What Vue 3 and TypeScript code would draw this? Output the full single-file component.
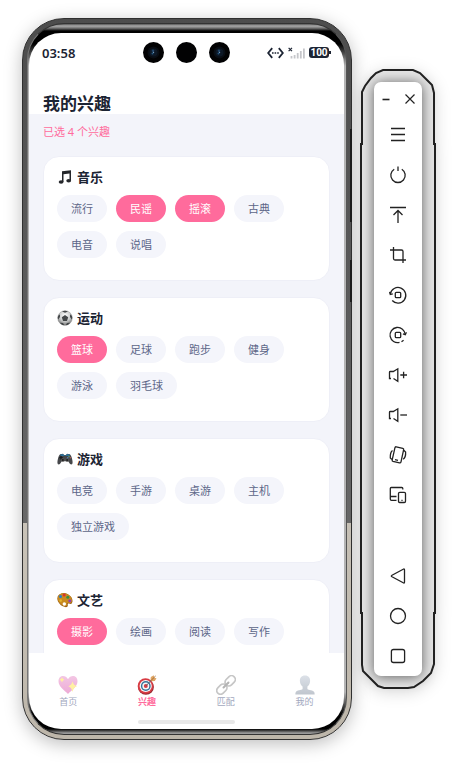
<script setup lang="ts">
import { ref, computed } from 'vue'

interface Group {
  id: string
  name: string
  items: string[]
}

const groups: Group[] = [
  { id: 'music', name: '音乐', items: ['流行', '民谣', '摇滚', '古典', '电音', '说唱'] },
  { id: 'sport', name: '运动', items: ['篮球', '足球', '跑步', '健身', '游泳', '羽毛球'] },
  { id: 'game', name: '游戏', items: ['电竞', '手游', '桌游', '主机', '独立游戏'] },
  { id: 'art', name: '文艺', items: ['摄影', '绘画', '阅读', '写作'] },
]

const selected = ref<string[]>(['民谣', '摇滚', '篮球', '摄影'])
const count = computed(() => selected.value.length)

function toggle(item: string) {
  selected.value = selected.value.includes(item)
    ? selected.value.filter((s) => s !== item)
    : [...selected.value, item]
}

const tabs = [
  { id: 'home', label: '首页' },
  { id: 'interest', label: '兴趣' },
  { id: 'match', label: '匹配' },
  { id: 'mine', label: '我的' },
]
const activeTab = ref('interest')

const tools: { name: string; paths: string[] }[] = [
  { name: 'menu', paths: ['M3 3.5H17M3 9.5H17M3 15.5H17'] },
  { name: 'power', paths: ['M6.2 4.2A7.2 7.2 0 1 0 13.8 4.2', 'M10 1.5V6'] },
  { name: 'top', paths: ['M2 2.5H18M10 18V6M5.5 10L10 5.5L14.5 10'] },
  { name: 'crop', paths: ['M2 5H13.5Q15 5 15 6.5V18', 'M5.5 2V13.5Q5.5 15 7 15H18'] },
  { name: 'rotate left', paths: ['M2.3 9A7.8 7.8 0 1 1 4.2 15.5', 'M1.6 6.8L2.3 9.4L4.8 8.8', 'M8.3 7.3H11.7Q12.7 7.3 12.7 8.3V11.7Q12.7 12.7 11.7 12.7H8.3Q7.3 12.7 7.3 11.7V8.3Q7.3 7.3 8.3 7.3Z'] },
  { name: 'rotate right', paths: ['M17.2 9.5A7.6 7.6 0 1 0 11.5 17.4M13.5 16.8L15.6 15.2', 'M18.4 7.2L17.3 9.6L14.9 8.8', 'M8.3 7.3H11.7Q12.7 7.3 12.7 8.3V11.7Q12.7 12.7 11.7 12.7H8.3Q7.3 12.7 7.3 11.7V8.3Q7.3 7.3 8.3 7.3Z'] },
  { name: 'volume up', paths: ['M3 13.5H1.5V7.2Q1.5 6.5 2.3 6.5H5.3L9.8 3.8V16.2L5.5 13.5', 'M12.3 10H19M15.6 6.7V13.3'] },
  { name: 'volume down', paths: ['M3 13.5H1.5V7.2Q1.5 6.5 2.3 6.5H5.3L9.8 3.8V16.2L5.5 13.5', 'M12.3 10H19'] },
  { name: 'shake', paths: ['M8.2 1.8L14.8 3.4Q15.9 3.7 15.6 4.8L13 16.8Q12.7 18.1 11.5 17.9L5 16.4Q3.9 16.1 4.2 14.9L6.9 2.8Q7.2 1.6 8.2 1.8Z', 'M7 14.6L10 15.3', 'M4.5 5.5Q2 7.5 2.3 13L4 14.5M15.8 5.2L17.6 7Q18 12.2 15.2 14.3'] },
  { name: 'devices', paths: ['M14.8 4.5V3.5Q14.8 2.5 13.8 2.5H3.3Q2.3 2.5 2.3 3.5V14Q2.3 15.3 3.5 15.3H8.5M2.3 11.5H8.5', 'M11.7 7.3H16.3Q17.5 7.3 17.5 8.5V16.3Q17.5 17.5 16.3 17.5H11.7Q10.5 17.5 10.5 16.3V8.5Q10.5 7.3 11.7 7.3Z', 'M13.4 15.3H14.6'] },
]
const navTools: { name: string; paths: string[] }[] = [
  { name: 'back', paths: ['M15.2 3.2Q16.5 2.5 16.5 4V16Q16.5 17.5 15.2 16.8L4 10.8Q2.6 10 4 9.2Z'] },
  { name: 'home', paths: ['M10 2.5A7.5 7.5 0 1 1 10 17.5A7.5 7.5 0 1 1 10 2.5Z'] },
  { name: 'recent', paths: ['M5.5 3.5H14.5Q16.6 3.5 16.6 5.6V14.4Q16.6 16.5 14.5 16.5H5.5Q3.4 16.5 3.4 14.4V5.6Q3.4 3.5 5.5 3.5Z'] },
]
</script>

<template>
  <div class="stage">
    <div class="phone">
      <i class="key volume-key"></i>
      <i class="key power-key"></i>
      <div class="bezel">
        <div class="screen">
          <div class="status">
            <span class="time">03:58</span>
            <div class="cameras">
              <svg v-for="n in 3" :key="n" width="21" height="21" viewBox="0 0 21 21">
                <circle cx="10.5" cy="10.5" r="10.5" fill="#020203" />
                <template v-if="n !== 2">
                  <circle cx="10.5" cy="10.5" r="6" fill="#090d13" />
                  <circle cx="10.5" cy="10.5" r="4" fill="#0d1826" />
                  <circle cx="10" cy="8.8" r="1.3" fill="#1f4265" />
                  <circle cx="9.5" cy="11.5" r="1" fill="#245680" />
                  <circle cx="10.6" cy="10.3" r=".6" fill="#8db6d8" />
                </template>
              </svg>
            </div>
            <div class="signals">
              <svg width="17" height="12" viewBox="0 0 17 12" fill="none" stroke="#1c2433" stroke-width="1.8">
                <path d="M5.2 1.2L1.2 6L5.2 10.8M11.8 1.2L15.8 6L11.8 10.8" />
                <path d="M5 6H12" stroke-dasharray="1.6 1" stroke-width="1.5" />
              </svg>
              <svg width="17" height="12" viewBox="0 0 17 12">
                <path d="M.6 .8L4 4.2M4 .8L.6 4.2" stroke="#1c2433" stroke-width="1.2" />
                <path d="M3.5 11.5V9M6.6 11.5V8M9.7 11.5V6M12.8 11.5V4M15.9 11.5V1.5" stroke="#c5c6ca" stroke-width="1.8" />
              </svg>
              <span class="battery">100</span>
            </div>
          </div>
          <h1>我的兴趣</h1>
          <main>
            <p class="summary">已选 {{ count }} 个兴趣</p>
            <section v-for="g in groups" :key="g.id" class="card">
              <h2>
                <svg v-if="g.id === 'music'" width="16" height="16" viewBox="0 0 16 16">
                  <path d="M5 2.3L14 1.3V11.5H12.5V4.4L6.5 5.2V13H5Z" fill="#25272b" />
                  <ellipse cx="4.1" cy="13" rx="2.4" ry="1.8" fill="#25272b" />
                  <ellipse cx="11.7" cy="11.8" rx="2.4" ry="1.8" fill="#25272b" />
                </svg>
                <svg v-else-if="g.id === 'sport'" width="16" height="16" viewBox="0 0 16 16">
                  <defs>
                    <radialGradient id="ball" cx=".5" cy=".35" r=".7">
                      <stop offset="0" stop-color="#fff" />
                      <stop offset=".5" stop-color="#cfd1d1" />
                      <stop offset="1" stop-color="#666" />
                    </radialGradient>
                  </defs>
                  <circle cx="8" cy="8" r="7.3" fill="url(#ball)" stroke="#858787" stroke-width=".4" />
                  <path d="M8 5L11.2 7.3L10 11H6L4.8 7.3ZM5 1.4L8 2.7L11 1.4Q8 .1 5 1.4ZM1 6L2.9 4.3L3 7L1.2 9.6Q.4 7.8 1 6ZM15 6L13.1 4.3L13 7L14.8 9.6Q15.6 7.8 15 6ZM3 12.7L6 13L7.5 15.4Q4.6 15.2 3 12.7ZM13 12.7L10 13L8.5 15.4Q11.4 15.2 13 12.7Z" fill="#444749" />
                </svg>
                <svg v-else-if="g.id === 'game'" width="16" height="16" viewBox="0 0 16 16">
                  <path d="M3.2 3.2L6 2.8L7 4H9L10 2.8L12.8 3.2Q14.3 4 15.2 8.6Q16.3 13.4 14.3 13.5Q12.8 13.4 11.2 10.3H4.8Q3.2 13.4 1.7 13.5Q-.3 13.4 .8 8.6Q1.7 4 3.2 3.2Z" fill="#45474a" />
                  <path d="M2.8 3.6L6 3L7.3 4.6H8.7L10 3L13.2 3.6L12 5H4Z" fill="#2b6f98" />
                  <path d="M4 5V8.4M2.3 6.7H5.7" stroke="#18191b" stroke-width="1.3" />
                  <circle cx="5.8" cy="9" r="1.5" fill="#222" stroke="#777" stroke-width=".4" />
                  <circle cx="10.2" cy="9" r="1.5" fill="#222" stroke="#777" stroke-width=".4" />
                  <circle cx="12" cy="5.5" r=".7" fill="#62af6a" />
                  <circle cx="13.3" cy="6.8" r=".7" fill="#c55c55" />
                  <circle cx="10.8" cy="6.8" r=".7" fill="#518ecb" />
                </svg>
                <svg v-else width="16" height="16" viewBox="0 0 16 16">
                  <path d="M2 2.8Q6-.5 11 2.2Q15.8 5 15.5 9.4Q15 12.8 12 11.6Q10.4 11.1 10.8 13Q11.1 15.5 8.2 15.1Q3.3 14 .9 9.2Q-.6 5 2 2.8Z" fill="#9c6014" />
                  <path d="M2.3 2.7Q6.3-.2 10.8 2.6Q15.3 5 15 9Q14.5 11.8 11.8 10.8Q9.6 10.4 10 13Q9.8 14.6 7.5 14Q3 12.7 1.2 8.7Q0 5 2.3 2.7Z" fill="#c98a1f" />
                  <ellipse cx="7.3" cy="12" rx="1.7" ry="1.8" fill="#fff" />
                  <circle cx="3.5" cy="4.5" r="1.5" fill="#247fce" />
                  <circle cx="7.2" cy="3" r="1.5" fill="#d9322d" />
                  <circle cx="10.8" cy="5.2" r="1.5" fill="#358e43" />
                  <circle cx="12.8" cy="8.8" r="1.5" fill="#963fb0" />
                  <circle cx="3.7" cy="8.6" r="1.3" fill="#e3b52d" />
                </svg>
                {{ g.name }}
              </h2>
              <div class="chips">
                <button
                  v-for="item in g.items"
                  :key="item"
                  type="button"
                  :class="['chip', { on: selected.includes(item) }]"
                  :aria-pressed="selected.includes(item)"
                  @click="toggle(item)"
                >{{ item }}</button>
              </div>
            </section>
          </main>
          <nav class="tabs">
            <button
              v-for="t in tabs"
              :key="t.id"
              type="button"
              :class="['tab', { active: activeTab === t.id }]"
              @click="activeTab = t.id"
            >
              <svg v-if="t.id === 'home'" width="20" height="20" viewBox="0 0 20 20">
                <defs>
                  <linearGradient id="heart" x1="0" y1="0" x2="0" y2="1">
                    <stop offset="0" stop-color="#f3c6e4" />
                    <stop offset="1" stop-color="#edaad5" />
                  </linearGradient>
                </defs>
                <path d="M10 19C6.5 15.5.5 11.5.5 6.3C.5 0 7.5-.5 10 4.2C12.5-.5 19.5 0 19.5 6.3C19.5 11.5 13.5 15.5 10 19Z" fill="url(#heart)" />
                <path d="M14.5 6.2Q15.3 10.3 19 11.2Q15.3 12.2 14.5 17Q13.7 12.2 10.3 11.2Q13.7 10.3 14.5 6.2ZM4 2.2Q4.5 4.1 6.4 4.8Q4.5 5.5 4 7.5Q3.5 5.5 1.5 4.8Q3.5 4.1 4 2.2Z" fill="#fff0a3" />
              </svg>
              <svg v-else-if="t.id === 'interest'" width="20" height="20" viewBox="0 0 20 20">
                <ellipse cx="8.9" cy="12" rx="8" ry="7.7" fill="#962630" />
                <circle cx="8.5" cy="11" r="7.8" fill="#d83b43" />
                <circle cx="8.7" cy="11" r="6.1" fill="#f5f7f8" />
                <circle cx="8.8" cy="11" r="4.9" fill="#367399" />
                <circle cx="8.8" cy="11" r="3.5" fill="#f5f7f8" />
                <circle cx="8.8" cy="11" r="2" fill="#d83b43" />
                <path d="M8.8 11L15 4.5" stroke="#596570" stroke-width="1" />
                <path d="M13.5 4.8L13.8 2L16.8 .2L17.1 2.8L19.5 3.3L17.8 6.1L14.8 6.3Z" fill="#dfa564" />
                <path d="M14.2 5.3L18.6 1" stroke="#9a632b" stroke-width=".9" />
              </svg>
              <svg v-else-if="t.id === 'match'" width="20" height="20" viewBox="0 0 20 20" fill="none">
                <g transform="rotate(-45 10 10)" stroke="#c6c6c6" stroke-width="1.7">
                  <rect x="-1.6" y="6.2" width="11.4" height="7.6" rx="3.8" />
                  <rect x="10.2" y="6.2" width="11.4" height="7.6" rx="3.8" />
                  <path d="M6.5 10H13.5" stroke="#b4b4b4" stroke-width="2" stroke-linecap="round" />
                </g>
              </svg>
              <svg v-else width="20" height="20" viewBox="0 0 20 20">
                <defs>
                  <linearGradient id="person" x1="0" y1="0" x2="0" y2="1">
                    <stop offset="0" stop-color="#dce1e8" />
                    <stop offset="1" stop-color="#c0c6ce" />
                  </linearGradient>
                </defs>
                <path d="M10 .5C13.7.5 15.3 3 15.1 6.2C15 9 13.6 10.5 12.4 11.6V14C13.5 15.2 18.5 15.1 19.3 17.2Q19.7 18.2 19.6 19.5H.4Q.3 18.2.7 17.2C1.5 15.1 6.5 15.2 7.6 14V11.6C6.4 10.5 5 9 4.9 6.2C4.7 3 6.3.5 10 .5Z" fill="url(#person)" />
              </svg>
              <span>{{ t.label }}</span>
            </button>
          </nav>
          <div class="home-bar"></div>
        </div>
      </div>
    </div>

    <aside class="dock">
      <svg class="outline" viewBox="0 0 76 621" preserveAspectRatio="none">
        <path
          d="M23 1H53L60 4L66 10L72 16L74 24V75H75V545H74V596L71 605L63 613L54 619L48 620H24L18 618L9 609L3 603L2 597V545H1V75H2V23L5 17L11 9L16 4Z"
          fill="#e6e6e6"
          stroke="#222"
          stroke-width="2"
        />
      </svg>
      <div class="panel">
        <div class="window">
          <button type="button" aria-label="minimise">
            <svg width="12" height="12" viewBox="0 0 12 12"><path d="M2.5 6.5H9.5" stroke="#222" stroke-width="1.6" /></svg>
          </button>
          <button type="button" aria-label="close">
            <svg width="12" height="12" viewBox="0 0 12 12"><path d="M1.5 1.5L10.5 10.5M10.5 1.5L1.5 10.5" stroke="#222" stroke-width="1.2" /></svg>
          </button>
        </div>
        <button v-for="t in tools" :key="t.name" class="tool" type="button" :aria-label="t.name">
          <svg width="20" height="20" viewBox="0 0 20 20">
            <path v-for="p in t.paths" :key="p" :d="p" />
          </svg>
        </button>
        <div class="nav-tools">
          <button v-for="t in navTools" :key="t.name" class="tool" type="button" :aria-label="t.name">
            <svg width="20" height="20" viewBox="0 0 20 20">
              <path v-for="p in t.paths" :key="p" :d="p" />
            </svg>
          </button>
        </div>
      </div>
    </aside>
  </div>
</template>

<style>
body {
  margin: 0;
  background: #fff;
}
</style>

<style scoped>
* {
  box-sizing: border-box;
}
button {
  border: 0;
  padding: 0;
  margin: 0;
  background: none;
  font-family: inherit;
  cursor: pointer;
}
svg {
  display: block;
}
.stage {
  display: flex;
  gap: 8px;
  height: 100vh;
  min-height: 700px;
  padding: 18px 33px 26px 22px;
  overflow: hidden;
  font-family: "Noto Sans", "Noto Sans CJK SC", sans-serif;
}
.phone {
  position: relative;
  flex: 1;
  min-width: 0;
  display: flex;
  padding: 4px;
  border: 1px solid #303030;
  border-radius: 42px;
  background: linear-gradient(#4d4d4d, #686868 70%, #c9c3b8 70%, #bdb6aa);
  box-shadow: 0 4px 18px rgba(0, 0, 0, 0.26);
}
.key {
  position: absolute;
  right: -1px;
  width: 2px;
  background: #1d1d1d;
}
.volume-key {
  top: 110px;
  height: 93px;
}
.power-key {
  top: 241px;
  height: 42px;
}
.bezel {
  flex: 1;
  min-width: 0;
  display: flex;
  padding: 9px 2px 5px 1px;
  border: 1px solid #333;
  border-right-color: #555;
  border-left-color: #777;
  border-radius: 37px;
  background: linear-gradient(
    #555 0,
    #aaa 2px,
    #777 4px,
    #000 7px,
    #000 20px,
    #b5b5b5 42px,
    #b5b5b5 calc(100% - 42px),
    #000 calc(100% - 20px),
    #000 calc(100% - 5px),
    #999 calc(100% - 1px)
  );
}
.screen {
  flex: 1;
  min-width: 0;
  display: flex;
  flex-direction: column;
  overflow: hidden;
  border-radius: 32px;
  background: #fff;
  color: #1c2433;
}
.status {
  flex: none;
  display: grid;
  grid-template-columns: 1fr auto 1fr;
  align-items: center;
  height: 39px;
  padding: 0 13px;
}
.time {
  font-size: 13px;
  font-weight: 600;
  line-height: 16px;
}
.cameras {
  display: flex;
  gap: 12px;
}
.signals {
  display: flex;
  align-items: center;
  justify-content: flex-end;
  gap: 4px;
}
.battery {
  position: relative;
  width: 20px;
  margin-right: 2px;
  border-radius: 3px;
  background: #1c2433;
  color: #fff;
  font-family: Roboto, sans-serif;
  font-size: 10px;
  font-weight: 700;
  line-height: 11px;
  text-align: center;
}
.battery::after {
  content: "";
  position: absolute;
  top: 4px;
  right: -2px;
  width: 2px;
  height: 3px;
  background: #1c2433;
}
h1 {
  flex: none;
  margin: 22px 14px 0;
  font-size: 17px;
  font-weight: 700;
  line-height: 20px;
}
main {
  flex: 1;
  min-height: 0;
  display: flex;
  flex-direction: column;
  gap: 16px;
  padding: 10px 14px 0;
  overflow: hidden;
  background: #f3f4fa;
}
.summary {
  margin: 0;
  color: #ff6b9c;
  font-size: 11px;
  line-height: 16px;
}
.card {
  flex: none;
  min-height: 125px;
  padding: 10px 13px 22px;
  border: 1px solid #eeeff7;
  border-radius: 16px;
  background: #fff;
}
h2 {
  display: flex;
  align-items: center;
  gap: 4px;
  margin: 0 0 8px;
  font-size: 13px;
  font-weight: 700;
  line-height: 20px;
}
.chips {
  display: flex;
  flex-wrap: wrap;
  gap: 9px;
}
.chip {
  height: 27px;
  padding: 0 14px;
  border-radius: 14px;
  background: #f4f5fb;
  color: #5c6688;
  font-size: 11px;
  line-height: 27px;
}
.chip.on {
  background: #ff6b9c;
  color: #fff;
}
.tabs {
  flex: none;
  display: flex;
  padding-top: 22px;
}
.tab {
  flex: 1;
  display: flex;
  flex-direction: column;
  align-items: center;
  gap: 1px;
  color: #a2a8be;
  font-size: 9px;
  line-height: 12px;
}
.tab.active {
  color: #ff6b9c;
  font-weight: 700;
}
.home-bar {
  flex: none;
  align-self: center;
  width: 31%;
  height: 4px;
  margin: 12px 0 5px;
  border-radius: 2px;
  background: #e8e8e8;
}
.dock {
  position: relative;
  flex: none;
  display: flex;
  width: 76px;
  margin: 51px 0;
  padding: 13px 14px;
}
.outline {
  position: absolute;
  inset: 0;
  width: 100%;
  height: 100%;
  filter: drop-shadow(0 3px 8px rgba(0, 0, 0, 0.16));
}
.panel {
  position: relative;
  flex: 1;
  display: flex;
  flex-direction: column;
  border-radius: 7px;
  background: #fff;
  box-shadow: 0 1px 13px rgba(0, 0, 0, 0.6);
}
.window {
  display: flex;
  justify-content: space-between;
  align-items: center;
  height: 33px;
  padding: 0 6px;
}
.tool {
  display: grid;
  place-items: center;
  width: 100%;
  height: 40px;
}
.tool path {
  fill: none;
  stroke: #222;
  stroke-width: 1.3;
}
.nav-tools {
  margin-top: auto;
}
</style>
